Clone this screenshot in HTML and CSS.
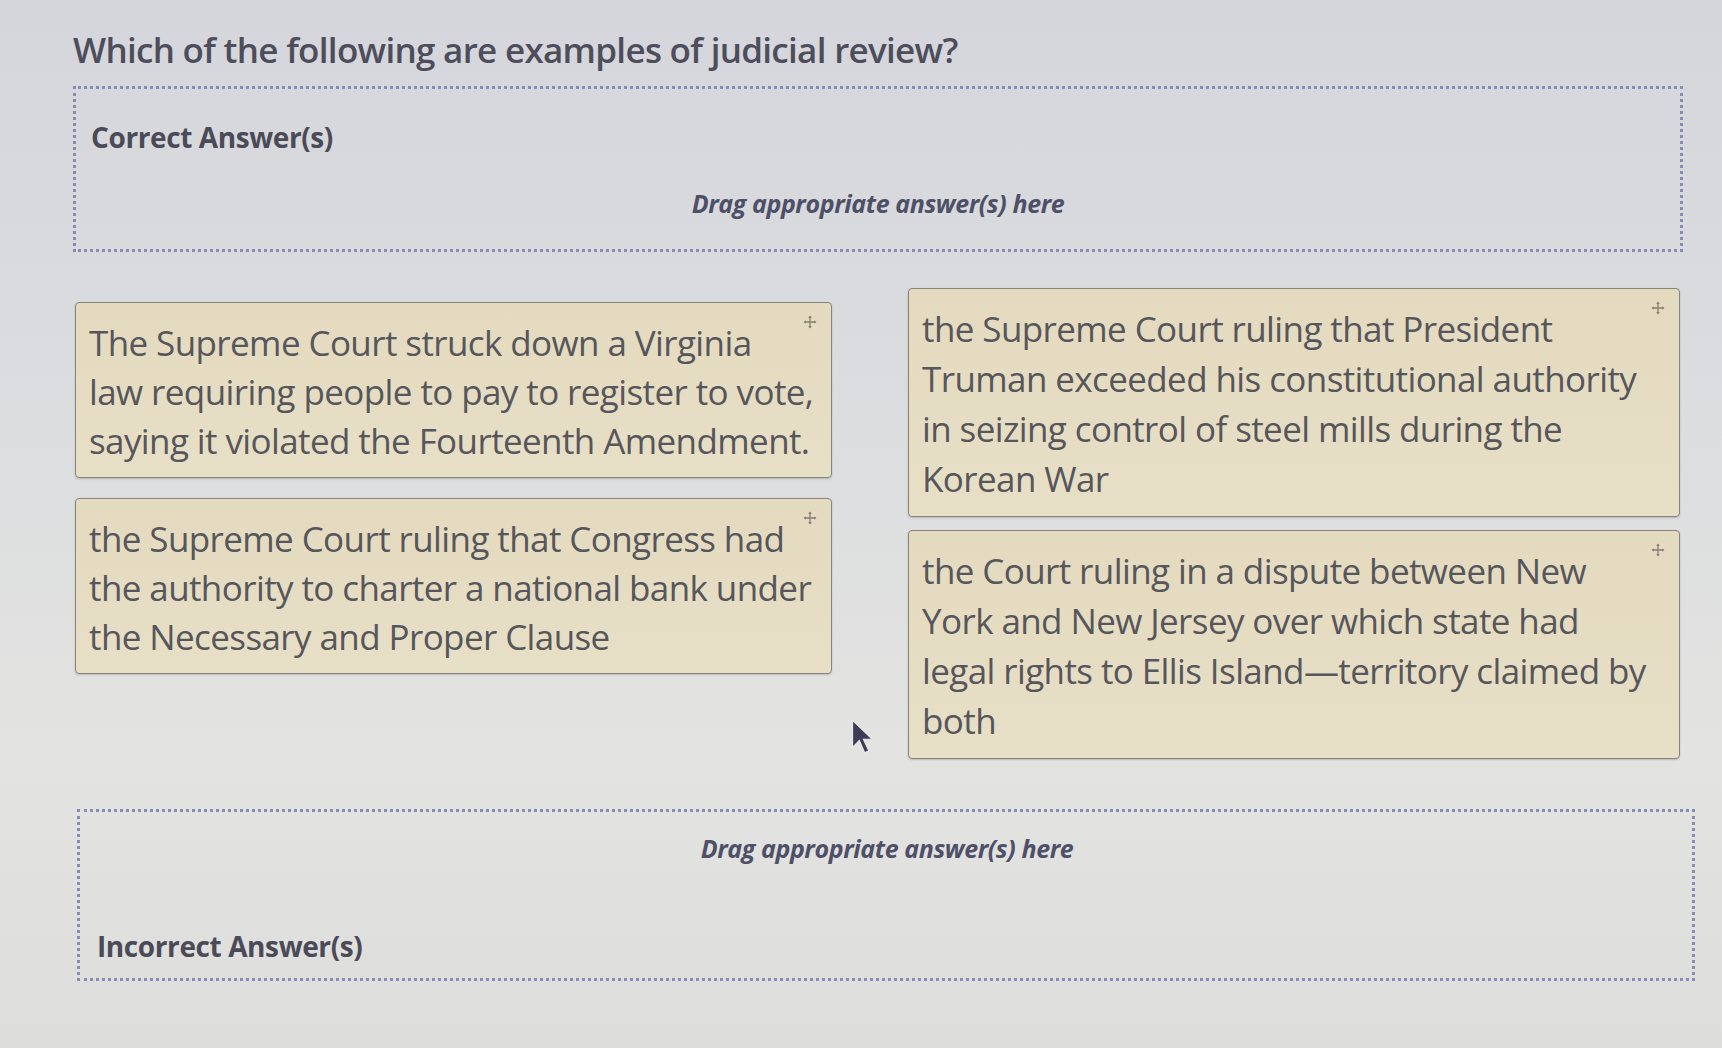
FILE: index.html
```html
<!DOCTYPE html>
<html lang="en">
<head>
<meta charset="utf-8">
<title>Judicial review</title>
<link rel="stylesheet" href="styles.css">
</head>
<body>
<main class="page">
  <h1 class="question">Which of the following are examples of judicial review?</h1>

  <section class="dropzone dropzone-top">
    <div class="zone-label">Correct Answer(s)</div>
    <div class="zone-hint">Drag appropriate answer(s) here</div>
  </section>

  <section class="choices">
    <div class="col col-left">
      <div class="card">
        <svg class="move" viewBox="0 0 12 12"><path d="M6 1.5v9M1.5 6h9"/><path class="head" d="M6 0.5l-1.6 1.8h3.2zM6 11.5l-1.6-1.8h3.2zM0.5 6l1.8-1.6v3.2zM11.5 6l-1.8-1.6v3.2z"/></svg>
        <p>The Supreme Court struck down a Virginia<br>law requiring people to pay to register to vote,<br>saying it violated the Fourteenth Amendment.</p>
      </div>
      <div class="card">
        <svg class="move" viewBox="0 0 12 12"><path d="M6 1.5v9M1.5 6h9"/><path class="head" d="M6 0.5l-1.6 1.8h3.2zM6 11.5l-1.6-1.8h3.2zM0.5 6l1.8-1.6v3.2zM11.5 6l-1.8-1.6v3.2z"/></svg>
        <p>the Supreme Court ruling that Congress had<br>the authority to charter a national bank under<br>the Necessary and Proper Clause</p>
      </div>
    </div>
    <div class="col col-right">
      <div class="card">
        <svg class="move" viewBox="0 0 12 12"><path d="M6 1.5v9M1.5 6h9"/><path class="head" d="M6 0.5l-1.6 1.8h3.2zM6 11.5l-1.6-1.8h3.2zM0.5 6l1.8-1.6v3.2zM11.5 6l-1.8-1.6v3.2z"/></svg>
        <p>the Supreme Court ruling that President<br>Truman exceeded his constitutional authority<br>in seizing control of steel mills during the<br>Korean War</p>
      </div>
      <div class="card">
        <svg class="move" viewBox="0 0 12 12"><path d="M6 1.5v9M1.5 6h9"/><path class="head" d="M6 0.5l-1.6 1.8h3.2zM6 11.5l-1.6-1.8h3.2zM0.5 6l1.8-1.6v3.2zM11.5 6l-1.8-1.6v3.2z"/></svg>
        <p>the Court ruling in a dispute between New<br>York and New Jersey over which state had<br>legal rights to Ellis Island—territory claimed by<br>both</p>
      </div>
    </div>
  </section>

  <section class="dropzone dropzone-bottom">
    <div class="zone-hint">Drag appropriate answer(s) here</div>
    <div class="zone-label">Incorrect Answer(s)</div>
  </section>

  <svg class="cursor" viewBox="0 0 16 26"><path d="M1 1 L1 21 L6 16 L10 25 L13 23.5 L9 15 L15.5 15 Z"/></svg>
</main>
</body>
</html>
```

FILE: styles.css
```css
html, body {
  margin: 0;
  padding: 0;
}

body {
  width: 1722px;
  height: 1048px;
  overflow: hidden;
  background: linear-gradient(180deg, #d5d6db 0%, #dbdcdf 35%, #e3e3e1 72%, #dddddb 100%);
  font-family: "Open Sans", "Noto Sans", sans-serif;
  color: #56565c;
}

.page {
  position: relative;
  padding: 22px 40px 0 73px;
}

.question {
  margin: 0;
  font-family: "Open Sans", sans-serif;
  font-weight: 600;
  font-size: 35px;
  line-height: 56px;
  letter-spacing: -0.7px;
  color: #4d4d5b;
}

.dropzone {
  border: 3px dotted #868cb6;
  box-sizing: border-box;
}

.dropzone-top {
  margin-top: 8px;
  width: 1610px;
  height: 166px;
  padding: 29px 15px 0 15px;
}

.zone-label {
  font-weight: 700;
  font-size: 28px;
  line-height: 38px;
  letter-spacing: -0.4px;
  color: #4b4b58;
}

.zone-hint {
  font-weight: 700;
  font-style: italic;
  font-size: 25px;
  line-height: 34px;
  letter-spacing: -0.4px;
  text-align: center;
  color: #4e5068;
}

.dropzone-top .zone-hint {
  margin-top: 30px;
}

.choices {
  display: grid;
  grid-template-columns: 757px 772px;
  column-gap: 76px;
  align-items: start;
  margin-top: 36px;
  margin-left: 2px;
}

.col {
  display: flex;
  flex-direction: column;
  align-items: stretch;
}

.col-left {
  padding-top: 14px;
  gap: 20px;
}

.col-right {
  gap: 13px;
}

.card {
  position: relative;
  background: linear-gradient(180deg, #e3dabf 0%, #e7dfc6 100%);
  border: 1.5px solid #87847a;
  border-radius: 4px;
  box-shadow: 0 1px 2px rgba(0, 0, 0, 0.18);
  padding: 15px 10px 12px 13px;
}

.col-left .card p {
  line-height: 49px;
}

.card p {
  margin: 0;
  white-space: nowrap;
  font-size: 35px;
  line-height: 50px;
  letter-spacing: -0.6px;
  color: #56565b;
}

.move {
  position: absolute;
  top: 12px;
  right: 14px;
  width: 14px;
  height: 14px;
  fill: none;
  stroke: #857f70;
  stroke-width: 1.1;
}

.move .head {
  fill: #857f70;
  stroke: none;
}

.dropzone-bottom {
  margin-top: 50px;
  margin-left: 4px;
  width: 1618px;
  height: 172px;
  padding: 19px 15px 0 17px;
}

.dropzone-bottom .zone-label {
  margin-top: 62px;
}

.cursor {
  position: absolute;
  left: 851px;
  top: 719px;
  width: 22px;
  height: 35px;
  fill: #3d3d55;
  stroke: #ececef;
  stroke-width: 0.8;
}
```
